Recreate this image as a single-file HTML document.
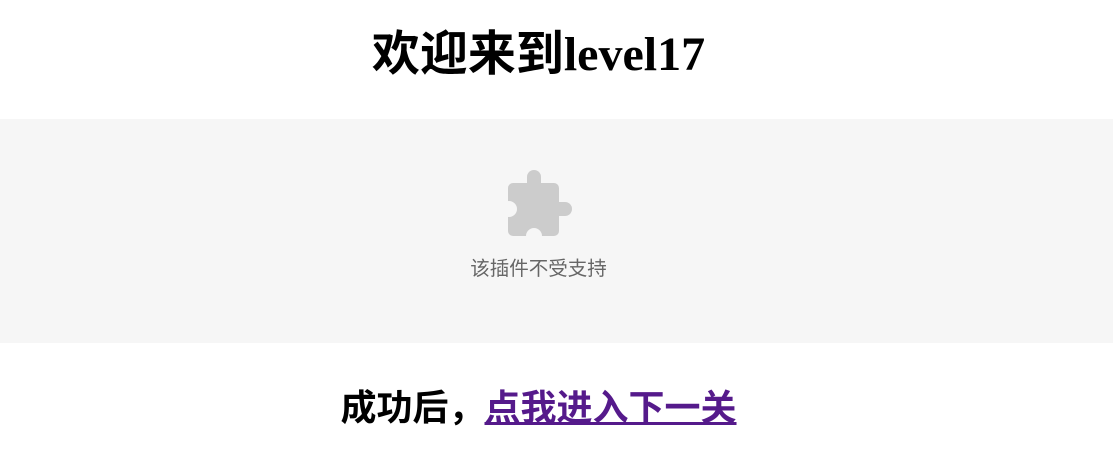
<!DOCTYPE html>
<html><head><meta charset="utf-8"><style>
html,body{margin:0;padding:0;background:#fff;width:1113px;height:452px;overflow:hidden}
h1{position:absolute;left:0;width:1077px;top:27px;margin:0;text-align:center;font:bold 48px/56px "Liberation Serif","Noto Sans CJK SC",serif;color:#000}
.box{position:absolute;left:0;top:119px;width:1113px;height:224px;background:#f6f6f6}
.msg{position:absolute;left:0;width:1077px;top:257px;text-align:center;font:19.5px/24px "Liberation Sans","Noto Sans CJK SC",sans-serif;color:#666}
h2{position:absolute;left:0;width:1077px;top:386px;margin:0;text-align:center;font:bold 36px/44px "Liberation Serif","Noto Sans CJK SC",serif;color:#000}
a{color:#551a8b;text-decoration:underline}
svg{position:absolute;left:0;top:0}
</style></head><body>
<h1>欢迎来到level17</h1>
<div class="box">
<svg width="1113" height="224">
<g fill="#cccccc">
<rect x="508" y="64" width="51" height="53" rx="5"/>
<circle cx="534" cy="58" r="7"/>
<rect x="527" y="58" width="14" height="10"/>
<circle cx="565" cy="90" r="7"/>
<rect x="555" y="83" width="10" height="14"/>
</g>
<g fill="#f6f6f6">
<circle cx="509" cy="90" r="8"/>
<circle cx="534" cy="117" r="8"/>
</g>
</svg>
</div>
<div class="msg">该插件不受支持</div>
<h2>成功后，<a>点我进入下一关</a></h2>
</body></html>
